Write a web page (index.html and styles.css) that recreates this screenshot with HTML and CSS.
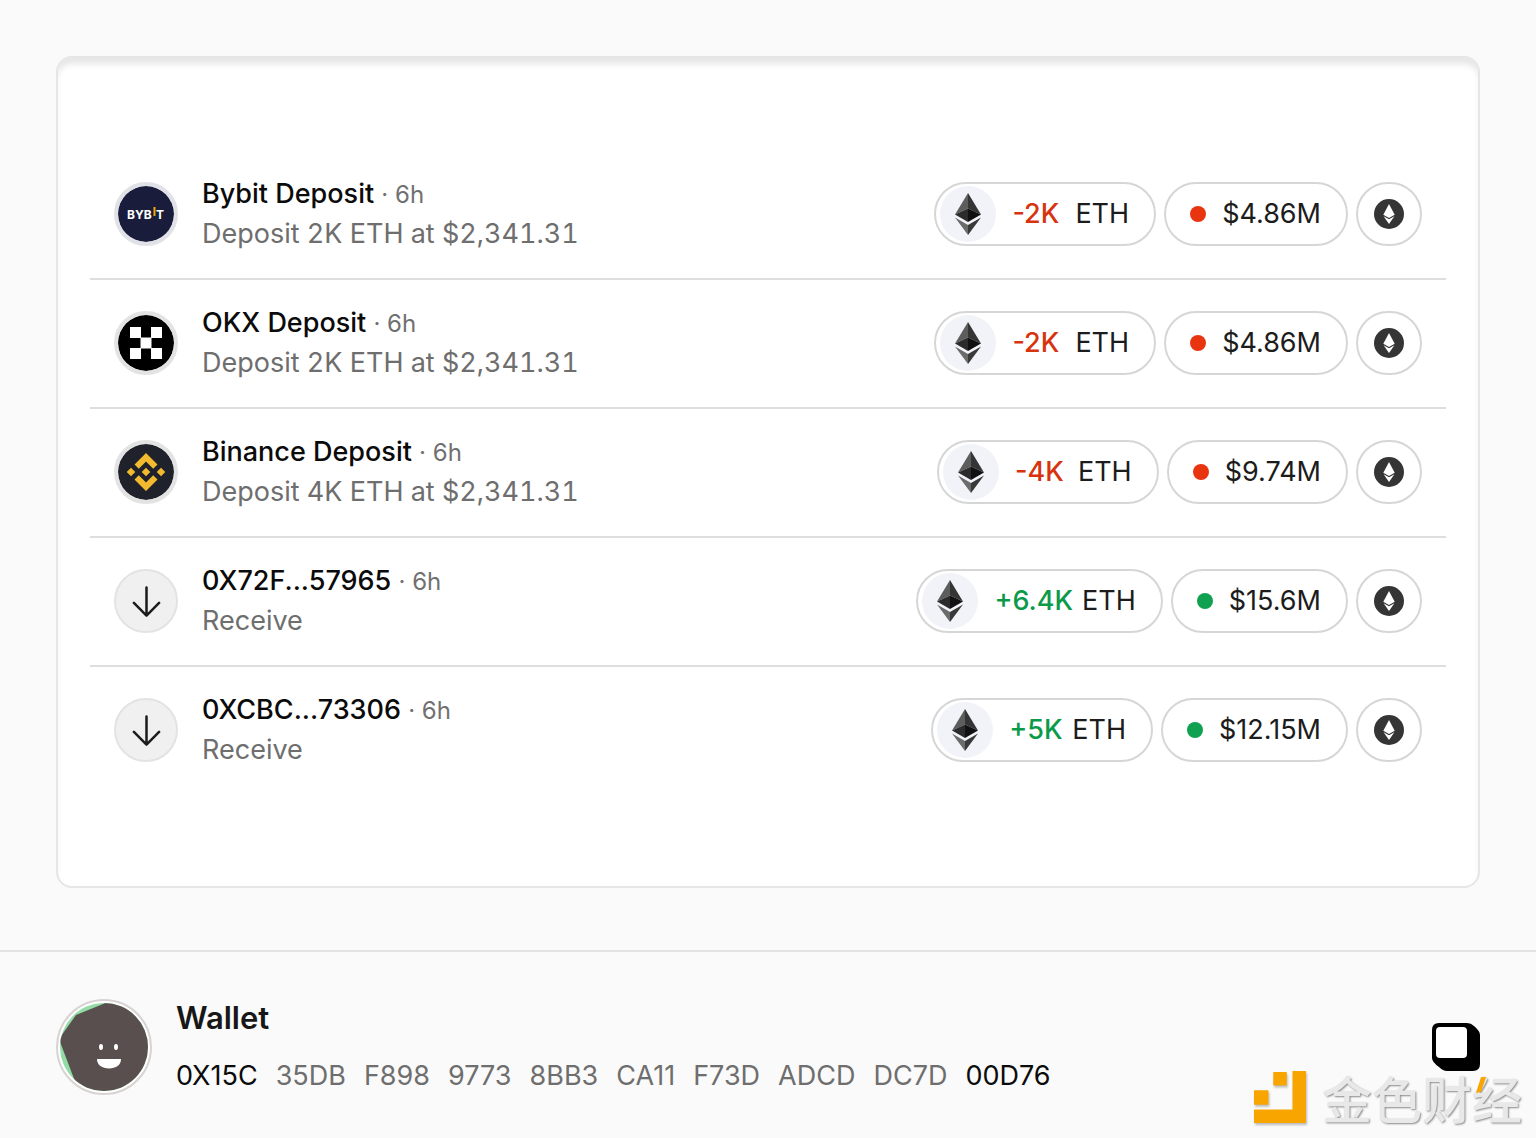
FILE: index.html
```html
<!DOCTYPE html>
<html lang="en">
<head>
<meta charset="utf-8">
<meta name="viewport" content="width=device-width, initial-scale=1">
<title>Wallet activity</title>
<link rel="stylesheet" href="styles.css">
</head>
<body>
<svg class="sprite" aria-hidden="true">
  <symbol id="eth" viewBox="0 0 26 42">
    <path d="M13 0 0 21.500 13 15.500z" fill="#5d5d5d"/>
    <path d="M13 0v15.500L26 21.500z" fill="#353535"/>
    <path d="M0 21.500 13 15.500V29z" fill="#2b2b2b"/>
    <path d="M26 21.500 13 15.500V29z" fill="#111"/>
    <path d="M0 24.500 13 32v10z" fill="#6b6b6b"/>
    <path d="M26 24.500 13 32v10z" fill="#393939"/>
  </symbol>
  <symbol id="eth-chain" viewBox="0 0 30 30">
    <circle cx="15" cy="15" r="15" fill="#353535"/>
    <path d="M15 5 9.300 15.800 15 18.900l5.700-3.100z" fill="#fff"/>
    <path d="M9.600 17.200 15 20.200l5.400-3L15 25z" fill="#fff"/>
  </symbol>
  <symbol id="arrow" viewBox="0 0 32 32">
    <path d="M16 1.500v29M3 17.500l13 13 13-13" fill="none" stroke="#1c1c1c" stroke-width="2.600" stroke-linecap="round" stroke-linejoin="round"/>
  </symbol>
</svg>

<main class="stage">
  <ul class="activity">
    <li class="row">
      <svg class="avatar avatar-bybit" viewBox="0 0 56 56" role="img" aria-label="Bybit">
        <circle cx="28" cy="28" r="28" fill="#191d3b"/>
        <text class="bybit" x="9" y="33">BYB</text>
        <path d="M36.500 21v9" stroke="#f7a600" stroke-width="2"/>
        <text class="bybit" x="38" y="33">T</text>
      </svg>
      <div class="info">
        <p class="title">Bybit Deposit <span class="time">· 6h</span></p>
        <p class="detail">Deposit 2K ETH at $2,341.31</p>
      </div>
      <div class="pills">
        <span class="pill token"><span class="coin"><svg><use href="#eth"/></svg></span><span class="amount down">-2K</span><span class="unit">ETH</span></span>
        <span class="pill value down">$4.86M</span>
        <a class="pill chain" href="#" aria-label="Ethereum"><svg><use href="#eth-chain"/></svg></a>
      </div>
    </li>
    <li class="row">
      <svg class="avatar" viewBox="0 0 56 56" role="img" aria-label="OKX">
        <circle cx="28" cy="28" r="28" fill="#000"/>
        <path d="M12 12h11v11H12zM33 12h11v11H33zM22.500 22.500h11v11h-11zM12 33h11v11H12zM33 33h11v11H33z" fill="#fff"/>
      </svg>
      <div class="info">
        <p class="title">OKX Deposit <span class="time">· 6h</span></p>
        <p class="detail">Deposit 2K ETH at $2,341.31</p>
      </div>
      <div class="pills">
        <span class="pill token"><span class="coin"><svg><use href="#eth"/></svg></span><span class="amount down">-2K</span><span class="unit">ETH</span></span>
        <span class="pill value down">$4.86M</span>
        <a class="pill chain" href="#" aria-label="Ethereum"><svg><use href="#eth-chain"/></svg></a>
      </div>
    </li>
    <li class="row">
      <svg class="avatar" viewBox="0 0 56 56" role="img" aria-label="Binance">
        <circle cx="28" cy="28" r="28" fill="#1f222b"/>
        <g fill="#f3ba2f">
          <path d="M28 9 39.500 20.500 35.200 24.700 28 17.600 20.800 24.700 16.500 20.500z"/>
          <path d="M28 47 39.500 35.500 35.200 31.300 28 38.400 20.800 31.300 16.500 35.500z"/>
          <path d="M13 23.700 17.300 28 13 32.300 8.700 28zM43 23.700 47.300 28 43 32.300 38.700 28zM28 23.700 32.300 28 28 32.300 23.700 28z"/>
        </g>
      </svg>
      <div class="info">
        <p class="title">Binance Deposit <span class="time">· 6h</span></p>
        <p class="detail">Deposit 4K ETH at $2,341.31</p>
      </div>
      <div class="pills">
        <span class="pill token"><span class="coin"><svg><use href="#eth"/></svg></span><span class="amount down">-4K</span><span class="unit">ETH</span></span>
        <span class="pill value down">$9.74M</span>
        <a class="pill chain" href="#" aria-label="Ethereum"><svg><use href="#eth-chain"/></svg></a>
      </div>
    </li>
    <li class="row">
      <span class="avatar receive"><svg><use href="#arrow"/></svg></span>
      <div class="info">
        <p class="title">0X72F...57965 <span class="time">· 6h</span></p>
        <p class="detail">Receive</p>
      </div>
      <div class="pills">
        <span class="pill token"><span class="coin"><svg><use href="#eth"/></svg></span><span class="amount up">+6.4K</span><span class="unit">ETH</span></span>
        <span class="pill value up">$15.6M</span>
        <a class="pill chain" href="#" aria-label="Ethereum"><svg><use href="#eth-chain"/></svg></a>
      </div>
    </li>
    <li class="row">
      <span class="avatar receive"><svg><use href="#arrow"/></svg></span>
      <div class="info">
        <p class="title">0XCBC...73306 <span class="time">· 6h</span></p>
        <p class="detail">Receive</p>
      </div>
      <div class="pills">
        <span class="pill token"><span class="coin"><svg><use href="#eth"/></svg></span><span class="amount up">+5K</span><span class="unit">ETH</span></span>
        <span class="pill value up">$12.15M</span>
        <a class="pill chain" href="#" aria-label="Ethereum"><svg><use href="#eth-chain"/></svg></a>
      </div>
    </li>
  </ul>
</main>

<footer class="wallet">
  <svg class="face" viewBox="0 0 96 96" role="img" aria-label="Wallet avatar">
    <defs><clipPath id="face-clip"><circle cx="48" cy="48" r="44"/></clipPath></defs>
    <circle cx="48" cy="48" r="47" fill="#fff" stroke="#d9d2d2" stroke-width="2"/>
    <g clip-path="url(#face-clip)">
      <path d="M0 0h96v96H0z" fill="#92dca5"/>
      <path d="M52 3 20 16 3 40 20 85 40 96h56V0H62z" fill="#594f4e"/>
    </g>
    <ellipse cx="45" cy="48" rx="2" ry="3" fill="#fff"/>
    <ellipse cx="60" cy="48" rx="2" ry="3" fill="#fff"/>
    <path d="M41 60h24c0 6-5 9.500-12 9.500S41 66 41 60z" fill="#fff"/>
  </svg>
  <div class="wallet-info">
    <h2 class="wallet-name">Wallet</h2>
    <p class="address"><span class="edge">0X15C</span><span>35DB</span><span>F898</span><span>9773</span><span>8BB3</span><span>CA11</span><span>F73D</span><span>ADCD</span><span>DC7D</span><span class="edge">00D76</span></p>
  </div>
  <button class="copy" type="button" aria-label="Copy address">
    <svg viewBox="0 0 48 48"><path d="M7 0h28q4 0 7 3 6 5 6 9v29q0 7-7 7H15q-4 0-8-4-7-5-7-9V7q0-7 7-7z" fill="#000"/><rect x="4" y="4" width="31" height="31" rx="4" fill="#fff"/></svg>
  </button>
</footer>

<div class="watermark">
  <svg class="mark" viewBox="0 0 54 54" aria-hidden="true"><path d="M20 1h14v14H20zM0 20h15v15H0zM40 0h14v54H0V40h40z" fill="#f8a500"/></svg>
  <span class="brand">金色财经</span>
  <svg class="stroke" viewBox="0 0 12 18" aria-hidden="true"><path d="M6 1h5L6 16 1 17z" fill="#f8a500"/></svg>
</div>
</body>
</html>
```
FILE: styles.css
```css
* {
  box-sizing: border-box;
}

body {
  margin: 0;
  background: #fafafa;
  color: #0b0b0b;
  font-family: Inter, "Liberation Sans", sans-serif;
  font-size: 27px;
  line-height: 40px;
}

p, h2, ul {
  margin: 0;
  padding: 0;
}

svg {
  display: block;
}

.sprite {
  position: absolute;
  width: 0;
  height: 0;
}

.stage {
  padding: 56px 56px 62px;
}

.activity {
  list-style: none;
  padding: 93px 32px 92px;
  border: 2px solid #e6e6e6;
  border-radius: 16px;
  background: #fff;
  box-shadow: inset 0 8px 6px -2px #e6e6e6;
}

.row {
  display: flex;
  align-items: center;
  gap: 24px;
  padding: 31px 24px 32px;
  border-bottom: 2px solid #dedede;
}

.row:last-child {
  border-bottom: 0;
}

.avatar {
  flex: none;
  width: 64px;
  height: 64px;
  padding: 2px;
  border: 2px solid #e3e3e3;
  border-radius: 50%;
  background: #e3e3e3;
}

.avatar-bybit {
  border-color: #e1e1e8;
  background: #e1e1e8;
}

.bybit {
  fill: #fff;
  font-size: 12px;
  font-weight: 700;
}

.receive {
  display: grid;
  place-items: center;
  background: #f0f0f0;
}

.receive svg {
  width: 31px;
  height: 31px;
}

.info {
  flex: 1;
  min-width: 0;
  margin: -10px 0;
}

.title {
  font-weight: 500;
}

.time {
  color: #707070;
  font-size: 24px;
  font-weight: 400;
  line-height: 24px;
}

.detail {
  color: #6e6e6e;
  font-variant-numeric: tabular-nums;
}

.pills {
  display: flex;
  gap: 8px;
}

.pill {
  display: flex;
  align-items: center;
  height: 64px;
  border: 2px solid #d6d6d6;
  border-radius: 32px;
  background: #fff;
  color: #1c1c1c;
}

.token {
  padding: 0 25px 0 4px;
}

.coin {
  display: grid;
  place-items: center;
  width: 56px;
  height: 56px;
  margin-right: 16px;
  border-radius: 50%;
  background: #f2f3f8;
}

.coin svg {
  width: 26px;
  height: 42px;
}

.amount {
  min-width: 54px;
  margin-right: 9px;
  font-weight: 500;
}

.amount.down {
  color: #d8330f;
}

.amount.up {
  color: #0b9a4a;
}

.value {
  gap: 16px;
  padding: 0 25px 0 24px;
}

.value::before {
  content: "";
  width: 16px;
  height: 16px;
  border-radius: 50%;
  background: #e8340f;
}

.value.up::before {
  background: #0fa14f;
}

.chain {
  justify-content: center;
  width: 66px;
}

.chain svg {
  width: 30px;
  height: 30px;
}

.wallet {
  display: flex;
  align-items: center;
  gap: 24px;
  padding: 46px 56px 42px;
  border-top: 2px solid #e2e2e2;
}

.face {
  flex: none;
  width: 96px;
  height: 96px;
}

.wallet-info {
  flex: 1;
}

.wallet-name {
  margin-bottom: 18px;
  color: #171717;
  font-size: 31px;
  font-weight: 600;
}

.address {
  display: flex;
  gap: 18px;
  color: #6e6e6e;
}

.edge {
  color: #0b0b0b;
}

.copy {
  width: 48px;
  height: 48px;
  padding: 0;
  border: 0;
  background: none;
}

.watermark {
  position: absolute;
  right: 14px;
  bottom: 11px;
  display: flex;
  align-items: center;
  gap: 16px;
}

.mark {
  width: 52px;
  height: 52px;
  filter: drop-shadow(1px 2px 1px #bbb);
}

.brand {
  color: #e8e8e8;
  font-family: "Noto Sans CJK SC", sans-serif;
  font-size: 50px;
  font-weight: 500;
  line-height: 60px;
  text-shadow: 1px 1px 2px #888;
}

.stroke {
  position: absolute;
  right: 35px;
  top: 9px;
  width: 12px;
  height: 18px;
}
```
